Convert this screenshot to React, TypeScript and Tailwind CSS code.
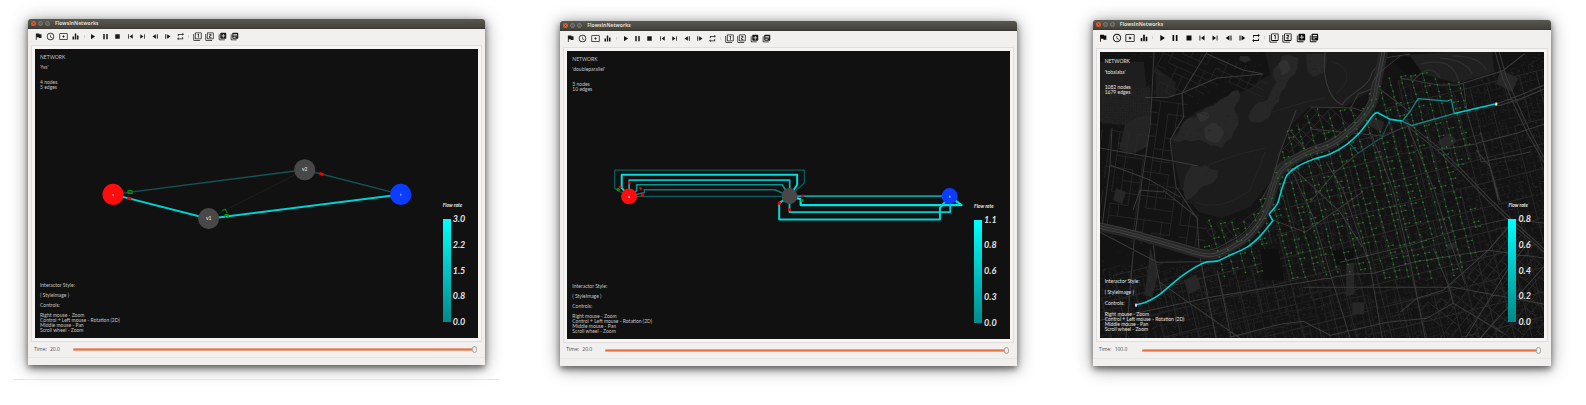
import React, { useState } from "react";
import {
  MdFlag, MdAccessTime, MdEqualizer, MdPlayArrow, MdPause, MdStop, MdSkipPrevious, MdSkipNext,
  MdRepeat, MdFilter1, MdFilter2, MdAddToPhotos, MdLibraryBooks,
} from "react-icons/md";

type Size = "regular" | "large";

function SettingsFrame() {
  return (
    <svg viewBox="0 0 24 24" fill="currentColor">
      <path fillRule="evenodd" d="M3 3h18q2 0 2 2v14q0 2-2 2H3q-2 0-2-2V5q0-2 2-2zm0 2v14h18V5zM12 8l1.500 2.500L16 12l-2.500 1.500L12 16l-1.500-2.500L8 12l2.500-1.500z" />
    </svg>
  );
}
function StepBack() {
  return <svg viewBox="0 0 24 24" fill="currentColor"><path d="M13 6v12L4 12zM15.500 6h2.500v12h-2.500z" /></svg>;
}
function StepForward() {
  return <svg viewBox="0 0 24 24" fill="currentColor"><path d="M11 6v12l9-6zM6 6h2.500v12H6z" /></svg>;
}

const groups: { label: string; icon: React.ReactNode }[][] = [
  [
    { label: "Flag", icon: <MdFlag /> },
    { label: "Clock", icon: <MdAccessTime /> },
    { label: "Display", icon: <SettingsFrame /> },
    { label: "Chart", icon: <MdEqualizer /> },
  ],
  [
    { label: "Play", icon: <MdPlayArrow /> },
    { label: "Pause", icon: <MdPause /> },
    { label: "Stop", icon: <MdStop /> },
    { label: "First", icon: <MdSkipPrevious /> },
    { label: "Last", icon: <MdSkipNext /> },
    { label: "Step back", icon: <StepBack /> },
    { label: "Step forward", icon: <StepForward /> },
    { label: "Repeat", icon: <MdRepeat /> },
  ],
  [
    { label: "Layer one", icon: <MdFilter1 /> },
    { label: "Layer two", icon: <MdFilter2 /> },
    { label: "Add layer", icon: <MdAddToPhotos /> },
    { label: "Library", icon: <MdLibraryBooks /> },
  ],
];

function Toolbar({ size }: { size: Size }) {
  return (
    <div className={size === "large" ? "mb-[3px] flex h-[15px] w-1/2 items-center pr-px pl-1" : "mb-[2px] flex h-[14px] w-[47%] items-center pr-[2px] pl-1"}>
      {groups.map((group, g) => (
        <React.Fragment key={g}>
          {g > 0 && <span className="flex w-[5px] shrink-0 justify-center"><span className="h-[3px] w-px bg-[#d4d2d0]" /></span>}
          {group.map((b) => (
            <button
              key={b.label}
              type="button"
              aria-label={b.label}
              className={
                size === "large"
                  ? "flex flex-1 items-center justify-center text-[#0c0c0c] [&>svg]:size-[10px]"
                  : "flex flex-1 items-center justify-center text-[#1a1a1a] [&>svg]:size-[9px]"
              }
            >
              {b.icon}
            </button>
          ))}
        </React.Fragment>
      ))}
    </div>
  );
}

function Legend({ ticks }: { ticks: string[] }) {
  return (
    <div className="relative mr-[13px] mb-4 flex flex-col self-end">
      <div className="mb-[9px] text-[5px] leading-[10px] font-bold text-[#e8e8e8] italic">Flow rate</div>
      <div className="flex h-[103px] gap-[2px]">
        <div className="w-2 bg-linear-to-b from-[#00ffff] to-[#008b8b]" />
        <div className="-my-[5px] flex flex-col justify-between text-[9px] leading-[10px] font-bold text-[#e4e4e4] italic">
          {ticks.map((t) => <span key={t}>{t}</span>)}
        </div>
      </div>
    </div>
  );
}

function Notes({ name, nodes, edges, size }: { name: string; nodes: number; edges: number; size: Size }) {
  const large = size === "large";
  return (
    <div className={large
      ? "relative flex flex-1 flex-col justify-between pt-[7px] pb-[6px] pl-[5px] text-[5px] leading-[5px] whitespace-nowrap text-[#e2e2e2]"
      : "relative flex flex-1 flex-col justify-between pt-[6px] pb-[5px] pl-[5px] text-[5px] leading-[5px] whitespace-nowrap text-[#c4c4c4]"}>
      <div>
        <p>NETWORK</p>
        <p className={large ? "mt-[6px]" : "mt-[5px]"}>'{name}'</p>
        <p className="mt-[10px]">{nodes} nodes</p>
        <p>{edges} edges</p>
      </div>
      <div className={large ? "flex flex-col gap-[6px]" : "flex flex-col gap-[5px]"}>
        <p>Interactor Style:</p>
        <p>( StyleImage )</p>
        <p>Controls:</p>
        <div>
          <p>Right mouse - Zoom</p>
          <p>Control + Left mouse - Rotation (2D)</p>
          <p>Middle mouse - Pan</p>
          <p>Scroll wheel - Zoom</p>
        </div>
      </div>
    </div>
  );
}

function FourNodeGraph() {
  return (
    <svg viewBox="0 0 443 289" preserveAspectRatio="none" className="absolute inset-0 size-full" fontFamily="Lato, sans-serif" fontSize="5" textAnchor="middle">
      <path d="M173.500 169.500L269.500 120.700" stroke="#1d1f1f" />
      <path d="M78 145.300L269.500 120.700L365.500 145.300" stroke="#145454" strokeWidth="1.400" fill="none" />
      <path d="M78 145.300L173.500 169.500L365.500 145.300" stroke="#00d2d2" strokeWidth="2" fill="none" />
      <circle cx="78" cy="145.300" r="10.600" fill="#ff0d0d" />
      <circle cx="173.500" cy="169.500" r="10.500" fill="#484848" />
      <circle cx="269.500" cy="120.700" r="10.500" fill="#484848" />
      <circle cx="365.500" cy="145.300" r="10.600" fill="#0c3cff" />
      <g fill="none" stroke="#089408" strokeWidth="1">
        <path d="M93 141.500h4v3h-4zM187 161.500l3-1.500 2 3.500M190 165.500h3v3h-3z" />
      </g>
      <path d="M92.500 147.500l4 .800-.500 3-4-.800zM284.500 123l4 .800-.500 3-4-.800z" fill="#f00000" />
      <g fill="#eee">
        <text x="78" y="147" fontSize="4">s</text>
        <text x="173.500" y="171.200">v1</text>
        <text x="269.500" y="122.400">v2</text>
        <text x="365.500" y="147" fontSize="4">t</text>
      </g>
    </svg>
  );
}

function ParallelGraph() {
  return (
    <svg viewBox="0 0 443 288" preserveAspectRatio="none" className="absolute inset-0 size-full" fontFamily="Lato, sans-serif" fontSize="4" textAnchor="middle">
      <g fill="none" strokeLinejoin="round">
        <path d="M62 145.500L47.800 138V119.300H237.800V132.300L223 145.500" stroke="#0a5c5c" strokeWidth="1.300" />
        <path d="M62 145.500H223" stroke="#0a6060" strokeWidth="1.300" />
        <path d="M62 145.500L77.500 141.700V139H208.200L223 145.500" stroke="#0a7878" strokeWidth="1.500" />
        <path d="M62 145.500L69.800 140V134H215.500L223 145.500" stroke="#0a9494" strokeWidth="1.600" />
        <path d="M62.200 145.500V129.300H223V145.500" stroke="#00c4c4" strokeWidth="1.600" />
        <path d="M62 145.500L54.800 137V124H230.500V134L223 145.500" stroke="#00dede" strokeWidth="2" />
        <path d="M223 145.300H383" stroke="#0a9f9f" strokeWidth="1.700" />
        <path d="M223 145.300L234 148.500V154.300H395.200L383 145.300" stroke="#00e4e4" strokeWidth="2.200" />
        <path d="M222.800 145.300V161.300H383.800V145.300" stroke="#00d0d0" strokeWidth="1.800" />
        <path d="M223 145.300L212.500 152.300V168.700H373.500V157.300L383 145.300" stroke="#00d8d8" strokeWidth="2" />
      </g>
      <circle cx="62.200" cy="145.600" r="8" fill="#ff0d0d" />
      <circle cx="222.800" cy="145.300" r="8" fill="#484848" />
      <circle cx="383.200" cy="145.300" r="8" fill="#0c3cff" />
      <path d="M51.500 136l2-1.500 1.500 2-2 1.500zM61 130.500h2.500v3H61zM72 137l2-1 1.500 2.500-2 1zM74 142h3v4h-3zM211 151h3v3h-3zM221.500 157.500h2.500v3h-2.500zM234.500 144h3v2.500h-3z" fill="#f00000" />
      <path d="M49 138l3-1 1.500 2.500-3 1zM234 148.500h3v2.500h-3z" fill="#089408" />
      <g fill="#fff" fontWeight="bold">
        <text x="62.200" y="147">s</text>
        <text x="383.200" y="147">t</text>
      </g>
    </svg>
  );
}

function randomSource(seed: number) {
  let s = seed;
  return () => {
    s = (s * 1664525 + 1013904223) % 4294967296;
    return s / 4294967296;
  };
}

type Point = [number, number];

function inside([x, y]: Point, poly: Point[]) {
  let hit = false;
  for (let i = 0, j = poly.length - 1; i < poly.length; j = i++) {
    const [xi, yi] = poly[i];
    const [xj, yj] = poly[j];
    if (yi > y !== yj > y && x < ((xj - xi) * (y - yi)) / (yj - yi) + xi) hit = !hit;
  }
  return hit;
}

/* Catmull-Rom curve through the points, written as cubic segments. */
function smooth(p: Point[]) {
  let d = `M${p[0][0]} ${p[0][1]}`;
  for (let i = 0; i < p.length - 1; i++) {
    const a = p[Math.max(i - 1, 0)];
    const b = p[i];
    const c = p[i + 1];
    const e = p[Math.min(i + 2, p.length - 1)];
    d += `C${(b[0] + (c[0] - a[0]) / 6).toFixed(1)} ${(b[1] + (c[1] - a[1]) / 6).toFixed(1)} ${(c[0] - (e[0] - b[0]) / 6).toFixed(1)} ${(c[1] - (e[1] - b[1]) / 6).toFixed(1)} ${c[0]} ${c[1]}`;
  }
  return d;
}

/* Rotated street grid clipped to a district, with random blocks left out. */
function streets(poly: Point[], angle: number, stepA: number, stepB: number, keep: number, seed: number) {
  const rnd = randomSource(seed);
  const c = Math.cos((angle * Math.PI) / 180);
  const s = Math.sin((angle * Math.PI) / 180);
  let d = "";
  for (let u = -500; u < 700; u += stepA) {
    for (let v = -500; v < 700; v += stepB) {
      const p: Point = [u * c - v * s, u * s + v * c];
      const hold = rnd();
      const hold2 = rnd();
      if (!inside(p, poly)) continue;
      if (hold < keep) d += `M${p[0].toFixed(1)} ${p[1].toFixed(1)}l${(stepA * c).toFixed(1)} ${(stepA * s).toFixed(1)}`;
      if (hold2 < keep) d += `M${p[0].toFixed(1)} ${p[1].toFixed(1)}l${(-stepB * s).toFixed(1)} ${(stepB * c).toFixed(1)}`;
    }
  }
  return d;
}

function speckle(poly: Point[], count: number, seed: number) {
  const rnd = randomSource(seed);
  let d = "";
  for (let i = 0; i < count; i++) {
    const p: Point = [rnd() * 444, rnd() * 286];
    if (inside(p, poly)) d += `M${p[0].toFixed(1)} ${p[1].toFixed(1)}h${(0.8 + rnd() * 1.4).toFixed(1)}`;
  }
  return d;
}

/* Junction marks along the avenues of the active district, and the streets that join them. */
function junctions(poly: Point[], hole: Point[]) {
  const rnd = randomSource(77);
  let dots = "";
  let roads = "";
  for (let a = -60; a < 420; a += 11.5) {
    let last: Point | null = null;
    for (let row = 0; row < 40; row++) {
      const base = -10 + row * 6.2 + rnd() * 1.6;
      const x = a + base * 0.27 + (rnd() - 0.5) * 0.8;
      const y = base + 14 - ((a + 60) % 46) * 0.12;
      const side = rnd();
      const gap = rnd() < 0.1;
      const p: Point = [x, y];
      if (!inside(p, poly) || inside(p, hole)) {
        last = null;
        continue;
      }
      if (last) roads += `M${last[0].toFixed(1)} ${last[1].toFixed(1)}L${x.toFixed(1)} ${y.toFixed(1)}`;
      last = p;
      if (gap) continue;
      dots += `M${(x - 0.9).toFixed(1)} ${y.toFixed(1)}h1.8M${x.toFixed(1)} ${(y - 0.8).toFixed(1)}v1.6`;
      if (side < 0.3) {
        const sx = x + 4.5;
        const sy = y - 1;
        dots += `M${(sx - 0.8).toFixed(1)} ${sy.toFixed(1)}h1.6M${sx.toFixed(1)} ${(sy - 0.7).toFixed(1)}v1.4`;
        roads += `M${x.toFixed(1)} ${y.toFixed(1)}L${sx.toFixed(1)} ${sy.toFixed(1)}`;
      }
    }
  }
  return { dots, roads };
}

const active: Point[] = [[210, 55], [188, 76], [174, 118], [178, 128], [158, 145], [155, 160], [130, 168], [103, 168], [104, 196], [116, 201], [117, 228], [135, 226], [158, 220], [185, 212], [190, 228], [217, 226], [240, 224], [275, 221], [291, 232], [333, 226], [357, 225], [377, 205], [368, 181], [382, 178], [360, 138], [355, 120], [377, 101], [367, 65], [364, 31], [320, 18], [287, 23], [268, 42], [258, 58]];
const lot: Point[] = [[161, 197], [178, 197], [184, 228], [163, 228]];
const east: Point[] = [[180, 118], [215, 106], [250, 90], [275, 62], [300, 25], [345, 32], [395, 20], [444, 0], [444, 286], [0, 286], [0, 215], [60, 212], [110, 212], [150, 196], [172, 168], [178, 140]];
const bank: Point[] = [[188, 76], [210, 55], [268, 56], [240, 84], [203, 103], [176, 120]];
const lowerBank: Point[] = [[103, 166], [135, 168], [155, 150], [172, 132], [166, 158], [148, 182], [110, 202]];
const west: Point[] = [[0, 76], [48, 74], [52, 44], [82, 44], [82, 70], [70, 88], [75, 134], [98, 165], [98, 196], [50, 184], [0, 170]];
const north: Point[] = [[52, 0], [110, 0], [165, 24], [160, 45], [120, 30], [82, 44], [52, 44]];
const blocks: Point[] = [[0, 36], [50, 34], [50, 68], [40, 74], [0, 70]];
const southeast: Point[] = [[388, 198], [412, 166], [444, 190], [444, 286], [340, 286], [318, 248], [343, 238]];
const south: Point[] = [[0, 220], [300, 235], [330, 286], [0, 286]];
const all: Point[] = [[0, 0], [444, 0], [444, 286], [0, 286]];

const maps = {
  eastFine: streets(east, -14, 6, 8, 0.55, 3),
  eastBig: streets(east, -14, 17, 24, 0.9, 5),
  bank: streets(bank, 43, 7, 12, 0.85, 9),
  lowerBank: streets(lowerBank, -38, 6, 7, 0.7, 10),
  west: streets(west, 8, 9, 12, 0.75, 12),
  north: streets(north, -66, 7, 9, 0.7, 14),
  blocks: streets(blocks, 2, 2.5, 2.5, 0.8, 15),
  southeast: streets(southeast, 38, 8, 11, 0.8, 16),
  south: streets(south, -12, 9, 13, 0.7, 18),
  dots: speckle(east, 5200, 21),
  dotsWest: speckle(all, 900, 22),
  active: junctions(active, lot),
};

const highway = smooth([[-4, 174], [27, 181], [53, 188], [80, 196], [97, 201], [112, 203], [130, 196], [150, 182], [166, 159], [173, 137], [181, 118], [203, 103], [230, 93], [246, 82], [260, 69], [272, 52], [277, 31], [284, -4]]);
const highwayEdge = smooth([[-4, 170], [27, 177], [53, 184], [82, 192], [108, 198], [128, 190], [146, 178], [162, 156], [170, 135], [178, 114], [202, 99], [228, 89], [243, 79], [257, 66], [268, 50], [275, 26], [300, 4]]);
const flowRoute = smooth([[36, 252.7], [44, 250.5], [52, 247], [60, 242], [73, 231], [83, 223], [92, 217], [100, 212.5], [107, 209.7], [117, 209], [128, 204], [147, 195], [160, 184], [172.7, 168.7]])
  + "L169 162"
  + smooth([[169, 162], [177, 152], [180, 143], [183, 133], [187, 123], [197, 114.7], [213, 107.3], [230, 102], [247, 92], [260, 80], [273, 63], [277, 60.5]])
  + "L290 67.300L302 69M354 61.500L396 51.700";

const avenues = [
  "M54 0L51.700 45L50 75L42 128L34 190L26 286",
  "M107 0L82 41L83.500 65L70 88L76 135L98 168",
  "M45 45.500L67 45.500L82 41L117 26L163 22M107 2L143 18L163 22",
  "M0 96L83 111L98 114M10 113L50 128L80 145M12 76L10 113L2 175",
  "M0 180L57 210L104 209.500M53 188L55 208L62 242",
  "M63 138L97 165L99 200L116 286M33 158L40 138L64 140",
  "M117 218L124 250L131 286M60 230L88 250L140 286",
  "M302 69L318 83L337 98L360 120L387 148L410 170L444 200",
  "M304 67L320 81L339 96L362 118L389 146L412 168L444 197",
  "M395 0L402 25L413 51L427 81L444 111M399 0L406 25L417 51L430 80L444 106",
  "M396 52L420 43L444 33M398 54L422 46L444 37",
  "M300 26L338 33L357 33L402 19L424 2",
  "M363 31L367 61L377 95L381 110",
  "M210 77L283 84M210 55L253 56L272 62M250 57L258 42L277 35L310 60",
  "M337 98L370 93L417 81L444 72M381 110L430 100",
  "M210 229L250 222L273 221L313 210L343 205L388 198L410 173",
  "M240 210L310 193L357 178L407 167L444 171",
  "M388 198L343 238L317 246L300 260M388 198L444 206",
  "M272 84L293 138L310 210L325 286M308 75L334 138L350 190L365 232",
  "M226 110L243 138L270 214L282 286M190 115L213 165L232 228L250 286",
  "M130 285L180 272L203 269L230 283L287 270L327 266L353 251L403 281",
  "M203 235L353 235L380 240L444 252M353 251L348 233L333 196",
  "M365 286L407 218L428 190M380 286L444 214",
  "M180 120L195 118L240 160L262 195M173 168L205 180L262 140",
  "M258 101L282 85L302 76L354 62M210 150L235 120L258 101",
  "M0 268L50 258L110 245L210 229M376 98L390 115L398 148M380 80L400 150",
  "M225 0C222 20 226 45 242 53C248 40 268 38 272 20L284 6L310 2",
  "M196 58L180 100L172 128L160 150M188 76L222 118",
].join("");

function CityMap() {
  return (
    <svg viewBox="0 0 444 286" preserveAspectRatio="none" className="absolute inset-0 size-full">
      <path d="M0 0H444V286H0z" fill="#131313" />
      <path d="M165 0H285L272 38L242 56L210 54L188 76L174 125L150 155L122 166L98 160L80 135L70 88L95 60L150 36L170 22z" fill="#1c1c1c" />
      <path d="M0 10H44L46 34L50 36V70L40 75L0 70zM55 15L76 30L74 45H56z" fill="#1e1e1e" />
      <path d="M305 3L350 0H392L394 20L357 31L322 22z" fill="#202020" />
      <path d="M25 72Q48 58 50 66L47 94Q32 106 19 97z" fill="#242424" />
      <g fill="#272727">
        <path d="M72 87q6-2 8-10t10-12q8 2 12-5t12-6q6-8 14-10 4-6 10-6 4 6 0 12-5 4-3 10 5 6 3 14-5 4-6 12-6 2-10 10-8-4-12-2-6-6-12-6-8 2-12 0-10 4-14-1z" />
        <path d="M149 62q5-10 10-12 8 1 10-6 3-8 7-14-5-6-2-14 6-4 8-12 8-2 16 2 1 8-3 16-8 4-10 14-6 4-6 14-6 2-9 14-8 8-13 6-10 2-8-8z" />
        <path d="M84 130q2-12 9-17 6 4 12 0 7 6 13 5 0 8-5 13-8 2-14 6-4 8-13 12-4-8-2-19zM206 2h20q2 10-3 19l-10 4-6-6z" />
        <path d="M140 4h8l3 4-6 3-6-3zM50 195l8 28-6 22-8-2 4-24z" />
      </g>
      <g fill="#303030">
        <path d="M104 76q6-6 12-5 6 4 8 9-3 9-8 11-8-1-11-5zM96 62q6-3 11-2 3 3 2 6-6 4-9 4zM178 12q6-6 9-3 4 4 3 9-5 5-8 6z" />
      </g>
      <path d="M88 138L110 112L140 102L165 96M95 150Q120 160 150 138L165 100M172 60L205 50L225 46M232 10Q250 14 246 30L236 42" stroke="#282828" strokeWidth=".8" fill="none" />
      <g fill="none">
        <path d={maps.eastFine} stroke="#212121" strokeWidth=".7" />
        <path d={maps.eastBig} stroke="#2c2c2c" strokeWidth=".8" />
        <path d={maps.dots} stroke="#272727" strokeWidth=".9" />
        <path d={maps.dotsWest} stroke="#202020" strokeWidth=".9" />
        <path d={maps.bank} stroke="#333333" strokeWidth=".7" />
        <path d={maps.lowerBank} stroke="#2c2c2c" strokeWidth=".7" />
        <path d={maps.west} stroke="#2a2a2a" strokeWidth=".8" />
        <path d={maps.north} stroke="#2a2a2a" strokeWidth=".7" />
        <path d={maps.blocks} stroke="#292929" strokeWidth=".5" />
        <path d={maps.southeast} stroke="#2e2e2e" strokeWidth=".8" />
        <path d={maps.south} stroke="#252525" strokeWidth=".7" />
      </g>
      <path d="M161 197H178L184 228H163zM231 199l22-3 2 14-20 3zM292 8l18-4 14 20-20-3z" fill="#0f0f0f" />
      <path d="M337 90l12-9 8 8-12 9zM270 64l14 6-3 10-14-7zM345 192l9-2 3 5-9 3zM246 212l8-2v32l-8 2zM252 250h12v12h-12zM84 228l12-6 5 14-12 6zM400 18l18 8-6 14-16-8zM16 136l10 4-4 12-9-4z" fill="#272727" />
      <g fill="none" strokeLinejoin="round">
        <path d={maps.active.roads} stroke="#2b3a2c" strokeWidth=".8" />
        <path d={avenues} stroke="#3b3b3b" strokeWidth="1" />
        <path d="M312 30Q330 8 340 26M320 12Q352 4 358 28M340 6Q366 8 372 22M352 4Q380 4 386 18" stroke="#2e2e2e" strokeWidth="1.500" />
        <path d={highway} stroke="#262626" strokeWidth="9" />
        <path d={highway} stroke="#454545" strokeWidth="3.600" />
        <path d={highway} stroke="#2c2c2c" strokeWidth="2" />
        <path d={highwayEdge} stroke="#434343" strokeWidth=".8" />
        <path d={maps.active.dots} stroke="#22782a" strokeWidth=".9" />
        <path d="M290 67L282 85L258 101L250 92" stroke="#145a5a" strokeWidth="1" />
        <path d="M302 69L310 59L318 46.500L347 49L351 47.500L354 61.500M302 69L311 73.500L354 61.500" stroke="#159292" strokeWidth="1.200" />
        <path d={flowRoute} stroke="#00cfd4" strokeWidth="1.600" />
      </g>
      <path d="M35 251.500h2v3h-2z" fill="#d9c8ff" />
      <path d="M395 50.500h2v3h-2z" fill="#ffffff" />
      <path d="M395 50.500h1v1h-1z" fill="#ff4040" />
    </svg>
  );
}

interface WindowProps {
  id: string;
  name: string;
  nodes: number;
  edges: number;
  ticks: string[];
  end: number;
  size: Size;
  margin: string;
  canvas: string;
  children: React.ReactNode;
}

function FlowWindow({ id, name, nodes, edges, ticks, end, size, margin, canvas, children }: WindowProps) {
  const [time, setTime] = useState(end);
  const large = size === "large";
  return (
    <section className={`${margin} min-w-0 rounded-t-[3px] bg-[#f1f0ee] shadow-[0_3px_6px_rgba(0,0,0,0.5),0_2px_18px_rgba(0,0,0,0.42)]`}>
      <header className="flex h-[10px] items-center gap-[2px] rounded-t-[3px] border-b border-[#3a3934] bg-linear-to-b from-[#5a594f] to-[#42413b] pl-[3px]">
        <button type="button" aria-label="Close" className="flex size-[5px] items-center justify-center rounded-full bg-[#e8592b]">
          <svg viewBox="0 0 6 6" className="size-[5px]"><path d="M2 2l2 2M4 2L2 4" stroke="#7a2a12" strokeWidth=".8" /></svg>
        </button>
        <button type="button" aria-label="Minimize" className="size-[5px] rounded-full border border-[#7d7c72] bg-[#5f5e56]" />
        <button type="button" aria-label="Maximize" className="size-[5px] rounded-full border border-[#7d7c72] bg-[#5f5e56]" />
        <h2 className="ml-[3px] font-['Open_Sans',sans-serif] text-[5px] leading-[9px] font-bold text-[#dfdbd2]">FlowsInNetworks</h2>
      </header>
      <Toolbar size={size} />
      <div className="mx-[3px] border border-[#e0dedc] bg-[#f6f5f4] p-[3px]">
        <div className={`${canvas} relative flex overflow-hidden bg-[#111111] font-[Lato,sans-serif]`}>
          {children}
          <Notes name={name} nodes={nodes} edges={edges} size={size} />
          <Legend ticks={ticks} />
        </div>
      </div>
      <div className={large ? "flex h-4 items-center pr-[10px] pl-[6px]" : "flex h-[15px] items-center pr-[8px] pl-[6px]"}>
        <label htmlFor={id} className="w-4 shrink-0 font-['Open_Sans',sans-serif] text-[5px] text-[#4c4c4c]">Time:</label>
        <output htmlFor={id} className={large ? "w-[27px] shrink-0 font-['Open_Sans',sans-serif] text-[5px] text-[#4c4c4c]" : "w-[23px] shrink-0 font-['Open_Sans',sans-serif] text-[5px] text-[#4c4c4c]"}>{time.toFixed(1)}</output>
        <input
          id={id}
          type="range"
          min={0}
          max={end}
          step={0.1}
          value={time}
          onChange={(e) => setTime(Number(e.target.value))}
          className="h-[7px] min-w-0 flex-1 appearance-none bg-transparent [&::-webkit-slider-runnable-track]:h-[3px] [&::-webkit-slider-runnable-track]:rounded-full [&::-webkit-slider-runnable-track]:border-y [&::-webkit-slider-runnable-track]:border-[#efa283] [&::-webkit-slider-runnable-track]:bg-[#e9703f] [&::-webkit-slider-thumb]:-mt-[3px] [&::-webkit-slider-thumb]:h-[7px] [&::-webkit-slider-thumb]:w-[5px] [&::-webkit-slider-thumb]:appearance-none [&::-webkit-slider-thumb]:rounded-full [&::-webkit-slider-thumb]:border [&::-webkit-slider-thumb]:border-[#a8a49f] [&::-webkit-slider-thumb]:bg-[#f0efed]"
        />
      </div>
      <footer className="h-2 border-t border-[#e8e6e4]" />
    </section>
  );
}

export default function App() {
  return (
    <main className="bg-white pb-6">
      <div className="grid grid-cols-[457fr_456fr_459fr] items-start gap-x-[75px] pr-[35px] pl-7">
        <div className="min-w-0">
          <FlowWindow id="time-a" name="fvs" nodes={4} edges={5} ticks={["3.0", "2.2", "1.5", "0.8", "0.0"]} end={20} size="regular" margin="mt-[19px]" canvas="aspect-[443/289]">
            <FourNodeGraph />
          </FlowWindow>
          <hr className="-mx-[14px] mt-[14px] border-[#e6e6e6]" />
        </div>
        <FlowWindow id="time-b" name="doubleparallel" nodes={3} edges={10} ticks={["1.1", "0.8", "0.6", "0.3", "0.0"]} end={20} size="regular" margin="mt-[21px]" canvas="aspect-[443/288]">
          <ParallelGraph />
        </FlowWindow>
        <FlowWindow id="time-c" name="tobalaba" nodes={1082} edges={1679} ticks={["0.8", "0.6", "0.4", "0.2", "0.0"]} end={100} size="large" margin="mt-5 ml-px" canvas="aspect-[444/286]">
          <CityMap />
        </FlowWindow>
      </div>
    </main>
  );
}
